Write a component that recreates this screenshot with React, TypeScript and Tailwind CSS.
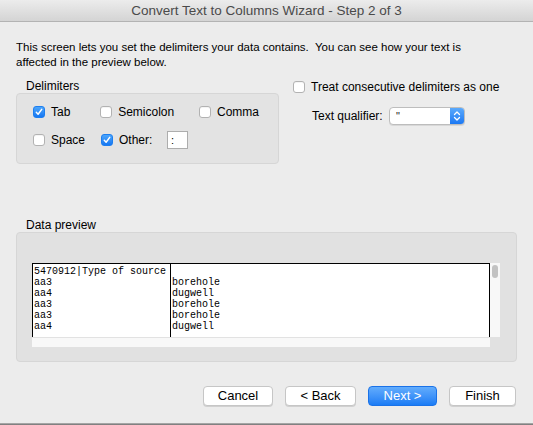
import React from "react";

function Box({ checked }: { checked?: boolean }) {
  if (checked) {
    return (
      <span className="flex h-[12px] w-[12px] shrink-0 items-center justify-center rounded-[3px] border border-[#1c7ef0] bg-gradient-to-b from-[#4ba5fb] to-[#1577f2]">
        <svg width="8" height="8" viewBox="0 0 8 8">
          <path d="M1.3 4.3 L3.1 6.2 L6.7 1.4" fill="none" stroke="white" strokeWidth="1.5" strokeLinecap="round" strokeLinejoin="round" />
        </svg>
      </span>
    );
  }
  return <span className="h-[12px] w-[12px] shrink-0 rounded-[3px] border border-[#b2b2b2] bg-white shadow-[inset_0_1px_0_#f4f4f4]" />;
}

function Check({ label, checked, w }: { label: string; checked?: boolean; w: string }) {
  return (
    <div className={`flex items-center gap-[6px] ${w}`}>
      <Box checked={checked} />
      <span className="text-[12px] leading-[14px] text-black">{label}</span>
    </div>
  );
}

function Btn({ children, w, primary }: { children: React.ReactNode; w: string; primary?: boolean }) {
  return (
    <button
      className={
        primary
          ? `flex h-[20px] ${w} items-center justify-center rounded-[4px] border border-[#1a72e8] bg-gradient-to-b from-[#62acfc] to-[#1a7cf5] text-[13px] text-white`
          : `flex h-[20px] ${w} items-center justify-center rounded-[4px] border border-[#c6c6c6] bg-white text-[13px] text-black shadow-[0_1px_0_#d0d0d0]`
      }
    >
      {children}
    </button>
  );
}

const rows = [
  ["5470912|Type of source", ""],
  ["aa3", "borehole"],
  ["aa4", "dugwell"],
  ["aa3", "borehole"],
  ["aa3", "borehole"],
  ["aa4", "dugwell"],
];

export default function App() {
  return (
    <div className="flex h-[425px] w-[533px] flex-col bg-[#ececec] font-['Liberation_Sans',Arial,sans-serif]">
      <div className="flex h-[22px] shrink-0 items-center justify-center border-b border-[#b3b3b3] bg-gradient-to-b from-[#ececec] to-[#d4d4d4] pt-[1px] text-[13.5px] text-[#4a4a4a]">
        Convert Text to Columns Wizard - Step 2 of 3
      </div>

      <div className="px-4 pt-[18px]">
        <p className="text-[11.5px] leading-[15px] text-black">
          This screen lets you set the delimiters your data contains.&nbsp; You can see how your text is
          <br />
          affected in the preview below.
        </p>

        <div className="mt-[9px] flex">
          <div className="w-[263px]">
            <div className="pl-[10px] text-[12px] leading-[14px] text-black">Delimiters</div>
            <div className="h-[71px] rounded-[4px] border border-[#d6d6d6] bg-[#e3e3e3] pl-[16px] pt-[12px]">
              <div className="flex h-[12px] items-center">
                <Check label="Tab" checked w="w-[68px]" />
                <Check label="Semicolon" w="w-[100px]" />
                <Check label="Comma" w="w-[80px]" />
              </div>
              <div className="mt-[13px] flex items-center">
                <Check label="Space" w="w-[68px]" />
                <Check label="Other:" checked w="w-[66px]" />
                <div className="flex h-[18px] w-[21px] items-center border border-[#adadad] bg-white pl-[3px] text-[11px] leading-none text-black">
                  :
                </div>
              </div>
            </div>
          </div>

          <div className="ml-[14px]">
            <div className="flex h-[15px] items-center gap-[6px] pt-[1px]">
              <Box />
              <span className="text-[12px] leading-[14px] text-black">Treat consecutive delimiters as one</span>
            </div>
            <div className="mt-[13px] flex items-center pl-[19px]">
              <span className="w-[77px] text-[12px] leading-[14px] text-black">Text qualifier:</span>
              <div className="flex h-[18px] w-[76px] overflow-hidden rounded-[4px] border border-[#bdbdbd] bg-white shadow-[0_1px_0_#d8d8d8]">
                <span className="flex-1 pl-[6px] text-[11px] leading-[16px] text-[#222222]">"</span>
                <span className="flex w-[14px] items-center justify-center bg-gradient-to-b from-[#5aa9fc] to-[#1a78f3]">
                  <svg width="8" height="12" viewBox="0 0 8 12">
                    <path d="M1.5 4.5 L4 2 L6.5 4.5 M1.5 7.5 L4 10 L6.5 7.5" fill="none" stroke="white" strokeWidth="1.3" strokeLinecap="round" strokeLinejoin="round" />
                  </svg>
                </span>
              </div>
            </div>
          </div>
        </div>

        <div className="mt-[54px] pl-[10px] text-[12px] leading-[14px] text-black">Data preview</div>
        <div className="h-[130px] w-[501px] rounded-[4px] border border-[#d6d6d6] bg-[#e1e1e1] pl-[15px] pt-[30px]">
          <div className="flex w-[468px]">
            <div className="flex h-[74px] w-[458px] border-x border-t border-black bg-white font-['Liberation_Mono',monospace] text-[10px] leading-[11px] text-black">
              <div className="w-[138px] border-r border-black pl-[1px] pt-[2px]">
                {rows.map((r, i) => (
                  <div key={i} className="whitespace-pre">{r[0]}</div>
                ))}
              </div>
              <div className="flex-1 pl-[1px] pt-[2px]">
                {rows.map((r, i) => (
                  <div key={i} className="h-[11px] whitespace-pre">{r[1]}</div>
                ))}
              </div>
            </div>
            <div className="h-[74px] w-[10px] bg-[#f8f8f8] pl-[2px] pt-[2px]">
              <div className="h-[13px] w-[6px] rounded-full bg-[#c2c2c2]" />
            </div>
          </div>
          <div className="h-[10px] w-[458px] border-t border-[#e2e2e2] bg-[#f8f8f8]" />
        </div>

        <div className="mt-[24px] flex justify-end gap-[12px] pr-[1px]">
          <Btn w="w-[70px]">Cancel</Btn>
          <Btn w="w-[71px]">&lt; Back</Btn>
          <Btn w="w-[69px]" primary>Next &gt;</Btn>
          <Btn w="w-[67px]">Finish</Btn>
        </div>
      </div>

      <div className="mt-auto h-[2px] bg-gradient-to-b from-[#b8b8b8] to-[#6f6f6f]" />
    </div>
  );
}
